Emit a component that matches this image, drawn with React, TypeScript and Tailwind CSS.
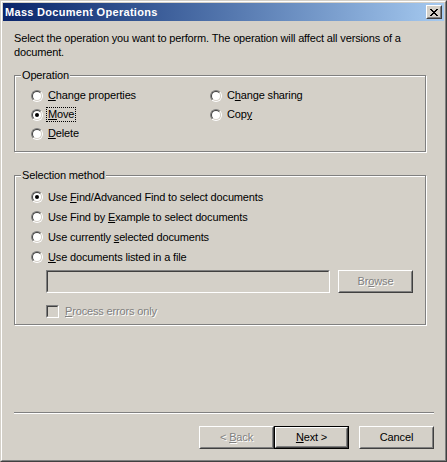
import React from "react";

const font = { fontFamily: '"Liberation Sans", Arial, sans-serif' };

function U({ children }: { children: React.ReactNode }) {
  return <span className="underline underline-offset-[1px]">{children}</span>;
}

function Radio({ checked }: { checked?: boolean }) {
  return (
    <div className="w-[12px] h-[12px] shrink-0 rounded-full border border-t-[#808080] border-l-[#808080] border-r-white border-b-white">
      <div className="w-full h-full rounded-full border border-t-[#404040] border-l-[#404040] border-r-[#d4d0c8] border-b-[#d4d0c8] bg-white flex items-center justify-center">
        {checked && <div className="w-[4px] h-[4px] rounded-full bg-black" />}
      </div>
    </div>
  );
}

function RadioRow({
  checked,
  children,
  focus,
  h = "h-[19px]",
}: {
  checked?: boolean;
  children: React.ReactNode;
  focus?: boolean;
  h?: string;
}) {
  return (
    <div className={`flex items-center ${h}`}>
      <Radio checked={checked} />
      <span
        className={`leading-[13px] ${focus ? "ml-[4px] outline outline-1 outline-dotted outline-black px-[1px]" : "ml-[5px]"}`}
      >
        {children}
      </span>
    </div>
  );
}

function Group({
  label,
  h,
  children,
}: {
  label: string;
  h: string;
  children: React.ReactNode;
}) {
  return (
    <div
      className={`relative w-[412px] ${h} border border-[#808080] shadow-[inset_1px_1px_0_#fff,1px_1px_0_#fff]`}
    >
      <span className="absolute left-[6px] top-[-7px] bg-[#d4d0c8] px-[1px] leading-[13px]">
        {label}
      </span>
      {children}
    </div>
  );
}

function Button({
  children,
  disabled,
  def,
}: {
  children: React.ReactNode;
  disabled?: boolean;
  def?: boolean;
}) {
  const inner = (
    <div className="w-full h-full border border-t-white border-l-white border-r-[#404040] border-b-[#404040]">
      <div
        className={`w-full h-full border border-t-[#d4d0c8] border-l-[#d4d0c8] border-r-[#808080] border-b-[#808080] flex items-center justify-center leading-[13px] ${
          disabled ? "text-[#808080] [text-shadow:1px_1px_0_#fff]" : "text-black"
        }`}
      >
        <span>{children}</span>
      </div>
    </div>
  );
  if (def)
    return (
      <div className="w-[75px] h-[23px] border border-black">{inner}</div>
    );
  return <div className="w-[75px] h-[23px]">{inner}</div>;
}

export default function App() {
  return (
    <div
      className="w-[447px] h-[462px] bg-[#d4d0c8] text-[11px] tracking-[-0.15px] text-black border border-t-[#d4d0c8] border-l-[#d4d0c8] border-r-[#404040] border-b-[#404040]"
      style={font}
    >
      <div className="w-full h-full border border-t-white border-l-white border-r-[#808080] border-b-[#808080] p-px flex flex-col">
        {/* Title bar */}
        <div className="h-[18px] shrink-0 bg-linear-to-r from-[#0a246a] to-[#a6caf0] flex items-center pl-[2px] pr-[2px]">
          <span className="text-white font-bold text-[11px] tracking-[0.3px] leading-[13px] flex-1">
            Mass Document Operations
          </span>
          <div className="w-[16px] h-[14px] border border-t-white border-l-white border-r-[#404040] border-b-[#404040]">
            <div className="w-full h-full bg-[#d4d0c8] border border-t-[#d4d0c8] border-l-[#d4d0c8] border-r-[#808080] border-b-[#808080] flex items-center justify-center">
              <svg width="8" height="7" viewBox="0 0 8 7" shapeRendering="crispEdges">
                <path
                  fill="#000"
                  d="M0 0h2v1h-2zM6 0h2v1h-2zM1 1h2v1h-2zM5 1h2v1h-2zM2 2h4v1h-4zM3 3h2v1h-2zM2 4h4v1h-4zM1 5h2v1h-2zM5 5h2v1h-2zM0 6h2v1h-2zM6 6h2v1h-2z"
                />
              </svg>
            </div>
          </div>
        </div>

        {/* Content */}
        <div className="flex flex-col pl-[11px]">
          <p className="mt-[10px] leading-[14px] w-[400px]">
            Select the operation you want to perform. The operation will affect
            all versions of a document.
          </p>

          <div className="mt-[16px]">
            <Group label="Operation" h="h-[77px]">
              <div className="pt-[10px] pl-[16px] grid grid-cols-[179px_1fr]">
                <div className="flex flex-col">
                  <RadioRow>
                    <U>C</U>hange properties
                  </RadioRow>
                  <RadioRow checked focus>
                    <U>M</U>ove
                  </RadioRow>
                  <RadioRow>
                    <U>D</U>elete
                  </RadioRow>
                </div>
                <div className="flex flex-col">
                  <RadioRow>
                    C<U>h</U>ange sharing
                  </RadioRow>
                  <RadioRow>
                    Cop<U>y</U>
                  </RadioRow>
                </div>
              </div>
            </Group>
          </div>

          <div className="mt-[23px]">
            <Group label="Selection method" h="h-[150px]">
              <div className="pt-[11px] pl-[16px] flex flex-col">
                <RadioRow checked h="h-[20px]">
                  Use <U>F</U>ind/Advanced Find to select documents
                </RadioRow>
                <RadioRow h="h-[20px]">
                  Use Find by <U>E</U>xample to select documents
                </RadioRow>
                <RadioRow h="h-[20px]">
                  Use currently <U>s</U>elected documents
                </RadioRow>
                <RadioRow h="h-[20px]">
                  <U>U</U>se documents listed in a file
                </RadioRow>
                <div className="mt-[3px] pl-[15px] flex items-center gap-[8px]">
                  <div className="w-[284px] h-[23px] border border-t-[#808080] border-l-[#808080] border-r-white border-b-white">
                    <div className="w-full h-full border border-t-[#404040] border-l-[#404040] border-r-[#d4d0c8] border-b-[#d4d0c8] bg-[#d4d0c8]" />
                  </div>
                  <Button disabled>
                    Br<U>o</U>wse
                  </Button>
                </div>
                <div className="mt-[12px] pl-[15px] flex items-center">
                  <div className="w-[13px] h-[13px] border border-t-[#808080] border-l-[#808080] border-r-white border-b-white">
                    <div className="w-full h-full border border-t-[#404040] border-l-[#404040] border-r-[#d4d0c8] border-b-[#d4d0c8] bg-[#d4d0c8]" />
                  </div>
                  <span className="ml-[6px] leading-[13px] text-[#808080] [text-shadow:1px_1px_0_#fff]">
                    <U>P</U>rocess errors only
                  </span>
                </div>
              </div>
            </Group>
          </div>

          <div className="mt-[87px] w-[420px] h-[2px] border-t border-t-[#808080] border-b border-b-white" />

          <div className="mt-[12px] w-[420px] flex justify-end">
            <Button disabled>
              &lt; <U>B</U>ack
            </Button>
            <Button def>
              <U>N</U>ext &gt;
            </Button>
            <div className="ml-[10px]">
              <Button>Cancel</Button>
            </div>
          </div>
        </div>
      </div>
    </div>
  );
}
